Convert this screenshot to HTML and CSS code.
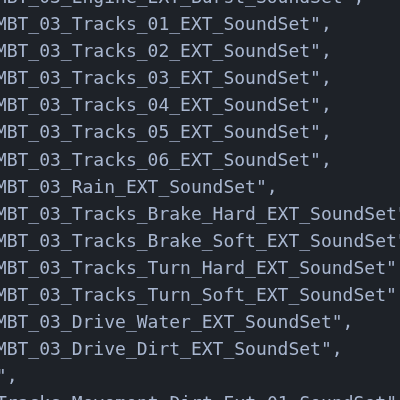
FILE: index.html
```html
<!DOCTYPE html>
<html lang="en">
<head>
  <meta charset="UTF-8" />
  <title>SoundSets</title>
  <link rel="stylesheet" href="styles.css">
</head>
<body>
  <div class="code">
    <div class="line">"MBT_03_Engine_EXT_Burst_SoundSet",</div>
    <div class="line">"MBT_03_Tracks_01_EXT_SoundSet",</div>
    <div class="line">"MBT_03_Tracks_02_EXT_SoundSet",</div>
    <div class="line">"MBT_03_Tracks_03_EXT_SoundSet",</div>
    <div class="line">"MBT_03_Tracks_04_EXT_SoundSet",</div>
    <div class="line">"MBT_03_Tracks_05_EXT_SoundSet",</div>
    <div class="line">"MBT_03_Tracks_06_EXT_SoundSet",</div>
    <div class="line">"MBT_03_Rain_EXT_SoundSet",</div>
    <div class="line">"MBT_03_Tracks_Brake_Hard_EXT_SoundSet",</div>
    <div class="line">"MBT_03_Tracks_Brake_Soft_EXT_SoundSet",</div>
    <div class="line">"MBT_03_Tracks_Turn_Hard_EXT_SoundSet",</div>
    <div class="line">"MBT_03_Tracks_Turn_Soft_EXT_SoundSet",</div>
    <div class="line">"MBT_03_Drive_Water_EXT_SoundSet",</div>
    <div class="line">"MBT_03_Drive_Dirt_EXT_SoundSet",</div>
    <div class="line">"",</div>
    <div class="line">Tracks_Movement_Dirt_Ext_01_SoundSet",</div>
  </div>
</body>
</html>
```

FILE: styles.css
```css
* { margin: 0; padding: 0; box-sizing: border-box; }

html, body {
  width: 400px;
  height: 400px;
  overflow: hidden;
}

body {
  background: #1e2228;
  font-family: 'DejaVu Sans Mono', monospace;
}

.code {
  margin-top: -17px;
  margin-left: -15px;
  font-size: 18px;
  line-height: 27.1px;
  color: #a9b7d0;
  filter: blur(0.5px);
}

.line {
  white-space: pre;
}

/* the last line sits one column further in */
.line:last-child {
  padding-left: 11px;
}
```
